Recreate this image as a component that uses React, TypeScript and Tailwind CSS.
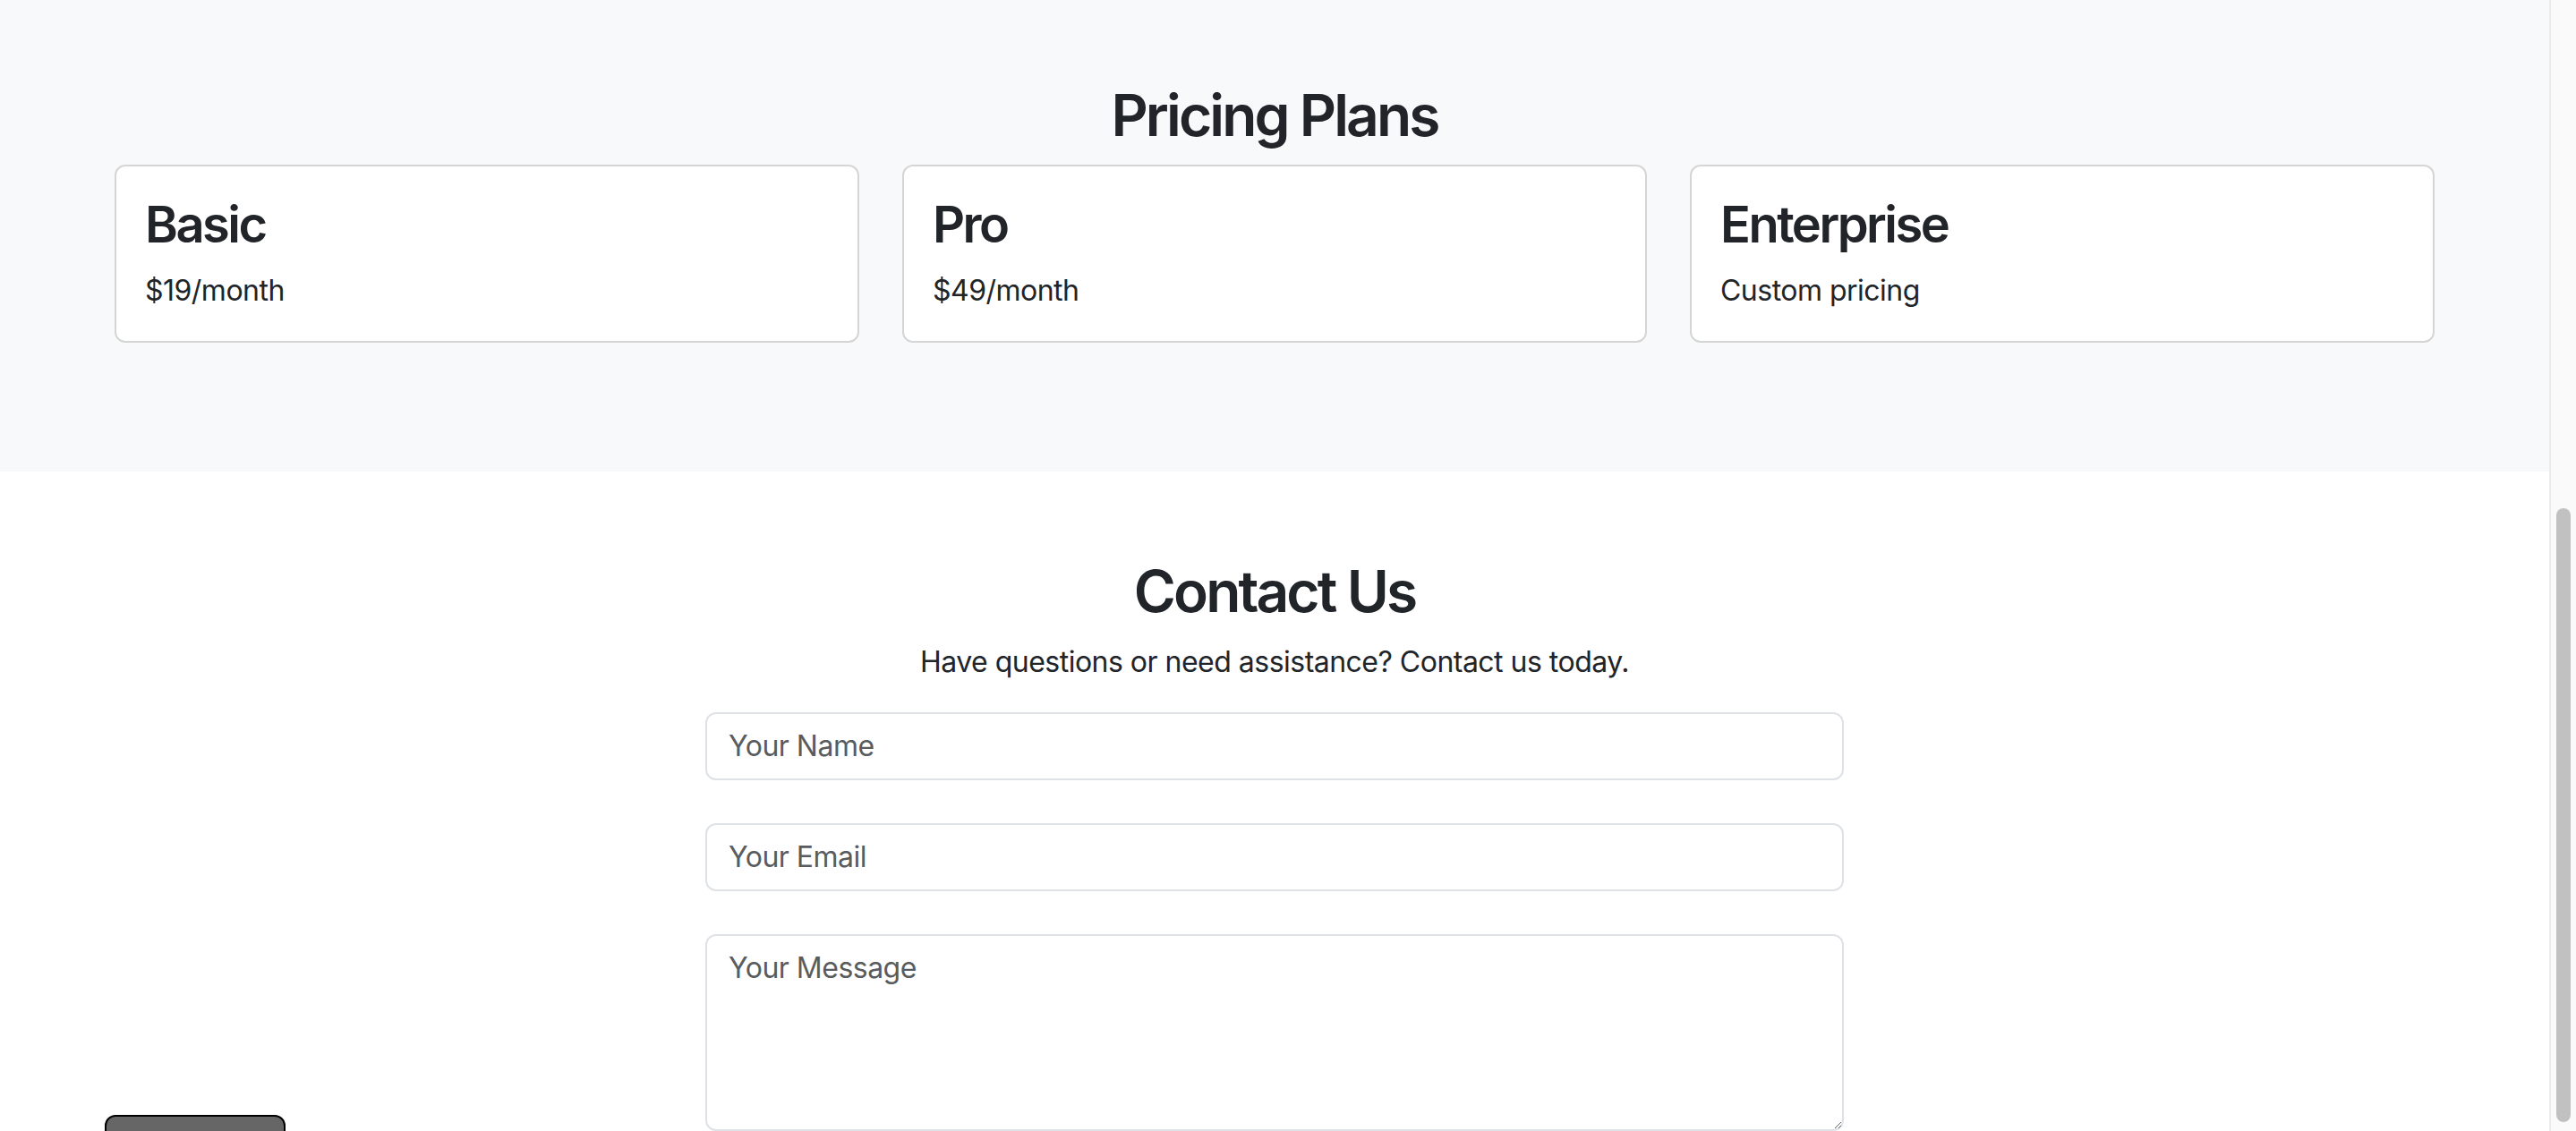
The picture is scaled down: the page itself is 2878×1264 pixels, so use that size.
import { useState } from 'react';

// Plans shown in the pricing grid
const plans = [
  { name: 'Basic', price: '$19/month' },
  { name: 'Pro', price: '$49/month' },
  { name: 'Enterprise', price: 'Custom pricing' },
];

export default function App() {
  const [form, setForm] = useState({ name: '', email: '', message: '' });

  const handleChange = (e: React.ChangeEvent<HTMLInputElement | HTMLTextAreaElement>) => {
    setForm({ ...form, [e.target.name]: e.target.value });
  };

  return (
    <div className="flex h-[1264px] overflow-hidden bg-white font-[Inter,'Noto_Sans',sans-serif] tracking-[-0.032em] text-[#212529]">
      <div className="min-w-0 flex-1">
        {/* --- Pricing --- */}
        <section className="bg-[#f8f9fa] pt-[91px] pb-24">
          <div className="mx-auto w-[2640px] px-6">
            <h2 className="mb-4 text-center text-[64px] leading-[1.2] font-semibold tracking-[-0.045em]">Pricing Plans</h2>
            <div className="mb-12 grid grid-cols-3 gap-12">
              {plans.map((plan) => (
                <div key={plan.name} className="rounded-xl border-2 border-[#d5d5d5] bg-white p-8">
                  <h3 className="mb-4 text-[56px] leading-[1.2] font-semibold tracking-[-0.045em]">{plan.name}</h3>
                  <p className="text-[32px] leading-[1.5]">{plan.price}</p>
                </div>
              ))}
            </div>
          </div>
        </section>

        {/* --- Contact --- */}
        <section className="bg-white pt-24">
          <div className="mx-auto w-[2640px] px-6 text-center">
            <h2 className="mb-4 text-[64px] leading-[1.2] font-semibold tracking-[-0.045em]">Contact Us</h2>
            <p className="mb-8 text-[32px] leading-[1.5]">Have questions or need assistance? Contact us today.</p>
            <form className="mx-auto flex w-[1272px] flex-col gap-12 text-left">
              <input
                type="text"
                name="name"
                value={form.name}
                onChange={handleChange}
                placeholder="Your Name"
                className="h-[76px] w-full rounded-xl border-2 border-[#dee2e6] bg-white px-6 text-[32px] leading-[1.5] text-[#212529] outline-none placeholder:text-[#595c5f]"
              />
              <input
                type="email"
                name="email"
                value={form.email}
                onChange={handleChange}
                placeholder="Your Email"
                className="h-[76px] w-full rounded-xl border-2 border-[#dee2e6] bg-white px-6 text-[32px] leading-[1.5] text-[#212529] outline-none placeholder:text-[#595c5f]"
              />
              <textarea
                name="message"
                value={form.message}
                onChange={handleChange}
                placeholder="Your Message"
                rows={4}
                className="h-[220px] w-full shrink-0 rounded-xl border-2 border-[#dee2e6] bg-white px-6 py-3 text-[32px] leading-[1.5] text-[#212529] outline-none placeholder:text-[#595c5f]"
              />
            </form>
          </div>
        </section>
      </div>

      {/* Scrollbar */}
      <div className="w-[30px] shrink-0 border-l-2 border-[#ececec] bg-[#fafafa] pt-[568px]">
        <div className="ml-[6px] h-[686px] w-4 rounded-full bg-[#c1c1c1]" />
      </div>

      {/* Floating button, mostly below the fold */}
      <button
        type="button"
        className="fixed top-[1246px] left-[117px] w-[202px] rounded-xl border-2 border-black bg-[#666666] py-3 text-[32px] leading-[1.5] text-white"
      >
        Back to top
      </button>
    </div>
  );
}
